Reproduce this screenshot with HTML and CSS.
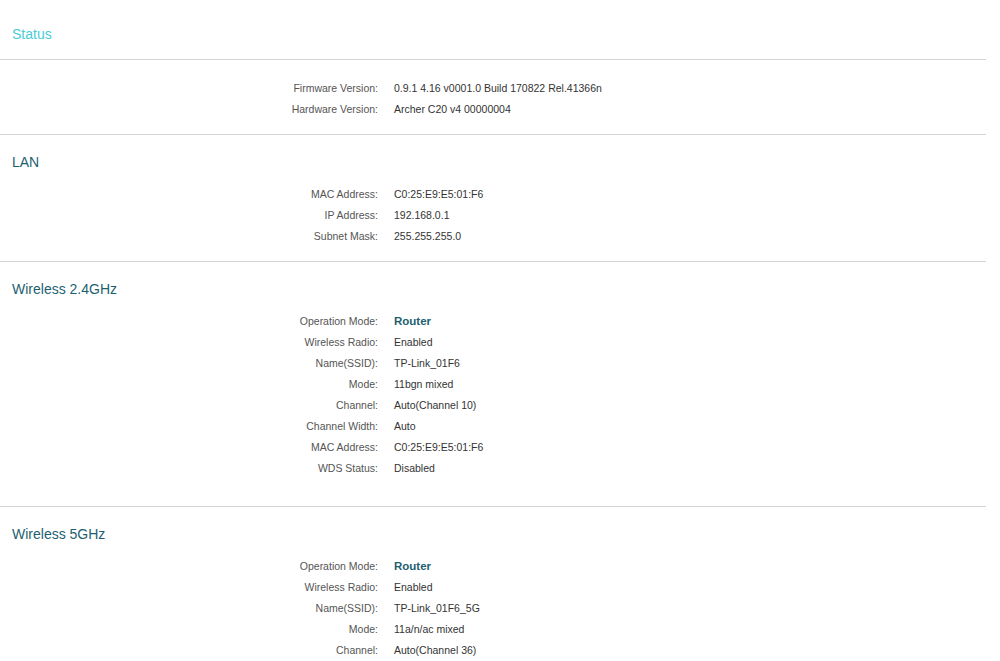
FILE: index.html
```html
<!DOCTYPE html>
<html lang="en">
<head>
  <meta charset="UTF-8">
  <meta name="viewport" content="width=device-width, initial-scale=1.0">
  <title>Status</title>
  <link rel="stylesheet" href="styles.css">
</head>
<body>
  <div class="page">

    <!-- Page title -->
    <div class="title-bar">
      <h1 class="page-title">Status</h1>
    </div>

    <!-- Versions -->
    <div class="panel">
      <div class="info-grid">
        <span class="label">Firmware Version:</span><span class="value">0.9.1 4.16 v0001.0 Build 170822 Rel.41366n</span>
        <span class="label">Hardware Version:</span><span class="value">Archer C20 v4 00000004</span>
      </div>
    </div>

    <!-- LAN -->
    <div class="panel">
      <h2 class="panel-title">LAN</h2>
      <div class="info-grid">
        <span class="label">MAC Address:</span><span class="value">C0:25:E9:E5:01:F6</span>
        <span class="label">IP Address:</span><span class="value">192.168.0.1</span>
        <span class="label">Subnet Mask:</span><span class="value">255.255.255.0</span>
      </div>
    </div>

    <!-- Wireless 2.4GHz -->
    <div class="panel panel-wide">
      <h2 class="panel-title">Wireless 2.4GHz</h2>
      <div class="info-grid">
        <span class="label">Operation Mode:</span><span class="value strong">Router</span>
        <span class="label">Wireless Radio:</span><span class="value">Enabled</span>
        <span class="label">Name(SSID):</span><span class="value">TP-Link_01F6</span>
        <span class="label">Mode:</span><span class="value">11bgn mixed</span>
        <span class="label">Channel:</span><span class="value">Auto(Channel 10)</span>
        <span class="label">Channel Width:</span><span class="value">Auto</span>
        <span class="label">MAC Address:</span><span class="value">C0:25:E9:E5:01:F6</span>
        <span class="label">WDS Status:</span><span class="value">Disabled</span>
      </div>
    </div>

    <!-- Wireless 5GHz -->
    <div class="panel">
      <h2 class="panel-title">Wireless 5GHz</h2>
      <div class="info-grid">
        <span class="label">Operation Mode:</span><span class="value strong">Router</span>
        <span class="label">Wireless Radio:</span><span class="value">Enabled</span>
        <span class="label">Name(SSID):</span><span class="value">TP-Link_01F6_5G</span>
        <span class="label">Mode:</span><span class="value">11a/n/ac mixed</span>
        <span class="label">Channel:</span><span class="value">Auto(Channel 36)</span>
        <span class="label">Channel Width:</span><span class="value">Auto</span>
        <span class="label">MAC Address:</span><span class="value">C0:25:E9:E5:01:F7</span>
        <span class="label">WDS Status:</span><span class="value">Disabled</span>
      </div>
    </div>

  </div>
</body>
</html>
```

FILE: styles.css
```css
/* General Styles */
html, body {
  margin: 0;
  padding: 0;
  background-color: #fff;
  overflow: hidden;
}

body {
  font-family: "Liberation Sans", Arial, sans-serif;
  color: #333;
}

.page {
  width: 986px;
}

.title-bar {
  height: 60px;
  display: flex;
  align-items: center;
  padding: 8px 12px 0;
  border-bottom: 1px solid #d4d4d4;
  box-sizing: border-box;
}

.page-title {
  margin: 0;
  font-size: 14px;
  font-weight: normal;
  color: #4acbd6;
}

.panel {
  padding: 18px 0 14px;
  border-bottom: 1px solid #d4d4d4;
}

.panel-wide {
  padding-bottom: 27px;
}

.panel-title {
  margin: -1px 0 12px 12px;
  font-size: 14px;
  line-height: 20px;
  font-weight: normal;
  color: #1d5f70;
}

.info-grid {
  display: grid;
  grid-template-columns: 378px 1fr;
  column-gap: 16px;
  font-size: 10.5px;
  line-height: 21px;
}

.label {
  text-align: right;
  color: #555;
}

.value {
  color: #333;
}

.value.strong {
  font-weight: bold;
  font-size: 11.5px;
  color: #1d5f70;
}
```
